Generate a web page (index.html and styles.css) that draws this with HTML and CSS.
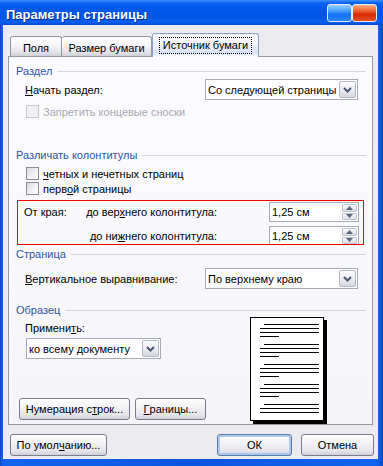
FILE: index.html
```html
<!DOCTYPE html>
<html lang="ru">
  <head>
    <meta charset="UTF-8" />
    <meta name="viewport" content="width=device-width, initial-scale=1.0" />
    <title>Параметры страницы</title>
    <link rel="stylesheet" href="styles.css">
  </head>
  <body>
    <div class="window">
      <div class="titlebar">
        <span class="title">Параметры страницы</span>
        <div class="caption-buttons">
          <span class="cap-btn help"></span>
          <span class="cap-btn close"></span>
        </div>
      </div>

      <div class="frame">
        <div class="client">
          <div class="tabs">
            <div class="tab tab-fields">Поля</div>
            <div class="tab tab-size">Размер бумаги</div>
            <div class="tab active"><span class="focus">Источник бумаги</span></div>
          </div>

          <div class="panel">
            <div class="group-title first">Раздел</div>
            <div class="row row-combo">
              <span><u>Н</u>ачать раздел:</span>
              <div class="combo combo-wide">
                <span class="combo-text">Со следующей страницы</span>
                <span class="combo-btn">
                  <svg width="9" height="6" viewBox="0 0 9 6"><path d="M1 1l3.5 3.5L8 1" /></svg>
                </span>
              </div>
            </div>
            <div class="check disabled first-check">
              <span class="box"></span>
              <span>Запретить концевые сноски</span>
            </div>

            <div class="group-title hdr-headers">Различать колонтитулы</div>
            <div class="check first-check">
              <span class="box"></span>
              <span><u>ч</u>етных и нечетных страниц</span>
            </div>
            <div class="check">
              <span class="box"></span>
              <span>перв<u>о</u>й страницы</span>
            </div>

            <div class="edges">
              <div class="edge-row">
                <span class="edge-cap">От края:</span>
                <span class="edge-label">до вер<u>х</u>него колонтитула:</span>
                <div class="spin">
                  <span class="spin-val">1,25 см</span>
                  <span class="spin-btns">
                    <span class="spin-half"><svg width="7" height="4" viewBox="0 0 7 4"><path d="M0 4L3.5 0L7 4Z" /></svg></span>
                    <span class="spin-half"><svg width="7" height="4" viewBox="0 0 7 4"><path d="M0 0L3.5 4L7 0Z" /></svg></span>
                  </span>
                </div>
              </div>
              <div class="edge-row second">
                <span class="edge-cap"></span>
                <span class="edge-label">до ни<u>ж</u>него колонтитула:</span>
                <div class="spin">
                  <span class="spin-val">1,25 см</span>
                  <span class="spin-btns">
                    <span class="spin-half"><svg width="7" height="4" viewBox="0 0 7 4"><path d="M0 4L3.5 0L7 4Z" /></svg></span>
                    <span class="spin-half"><svg width="7" height="4" viewBox="0 0 7 4"><path d="M0 0L3.5 4L7 0Z" /></svg></span>
                  </span>
                </div>
              </div>
            </div>

            <div class="group-title hdr-page">Страница</div>
            <div class="row row-combo row-valign">
              <span><u>В</u>ертикальное выравнивание:</span>
              <div class="combo combo-wide">
                <span class="combo-text">По верхнему краю</span>
                <span class="combo-btn">
                  <svg width="9" height="6" viewBox="0 0 9 6"><path d="M1 1l3.5 3.5L8 1" /></svg>
                </span>
              </div>
            </div>

            <div class="group-title hdr-sample">Образец</div>
            <div class="sample">
              <div class="sample-left">
                <div class="apply-label">Примени<u>т</u>ь:</div>
                <div class="combo combo-apply">
                  <span class="combo-text">ко всему документу</span>
                  <span class="combo-btn">
                    <svg width="9" height="6" viewBox="0 0 9 6"><path d="M1 1l3.5 3.5L8 1" /></svg>
                  </span>
                </div>
                <div class="sample-buttons">
                  <button class="btn btn-lines">Нумерация с<u>т</u>рок...</button>
                  <button class="btn btn-borders"><u>Г</u>раницы...</button>
                </div>
              </div>
              <div class="page">
                <div class="para"><i class="ln indent"></i><i class="ln"></i><i class="ln"></i><i class="ln short"></i></div>
                <div class="para"><i class="ln indent"></i><i class="ln"></i><i class="ln"></i><i class="ln short"></i></div>
                <div class="para"><i class="ln indent"></i><i class="ln"></i><i class="ln"></i><i class="ln short"></i></div>
                <div class="para"><i class="ln indent"></i><i class="ln"></i><i class="ln"></i><i class="ln short"></i></div>
                <div class="para"><i class="ln indent"></i><i class="ln"></i><i class="ln"></i></div>
              </div>
            </div>
          </div>

          <div class="footer">
            <button class="btn btn-default">По умол<u>ч</u>анию...</button>
            <button class="btn btn-ok">ОК</button>
            <button class="btn btn-cancel">Отмена</button>
          </div>
        </div>
      </div>
    </div>
  </body>
</html>
```

FILE: styles.css
```css
* {
  margin: 0;
  padding: 0;
  box-sizing: border-box;
}

body {
  font-family: "Liberation Sans", Arial, sans-serif;
  font-size: 11px;
  color: #000;
  background-color: #0b56df;
}

u {
  text-decoration: underline;
  text-underline-offset: 1px;
}

.window {
  width: 383px;
  height: 466px;
  display: flex;
  flex-direction: column;
}

/* title bar */
.titlebar {
  height: 25px;
  display: flex;
  align-items: flex-start;
  padding-left: 6px;
  background: linear-gradient(#3d93ff 0, #0a62f2 3px, #0058ee 8px, #0055e5 17px, #0a60f0 22px, #0347d2 25px);
}

.title {
  flex: 1;
  color: #fff;
  font-weight: bold;
  font-size: 13px;
  line-height: 15px;
  padding-top: 7px;
  text-shadow: 1px 1px 0 #0b2c8a;
}

.caption-buttons {
  display: flex;
  margin: 4px 6px 0 0;
}

.cap-btn {
  width: 25px;
  height: 18px;
  border: 1px solid #e4ecf8;
  border-radius: 3px;
}

.help {
  background: linear-gradient(#9bd0ff, #4aa2ff 35%, #1470f5 60%, #2a86ff);
}

.close {
  background: linear-gradient(#ffb080, #ec6536 35%, #d42a00 60%, #e2522a);
}

/* window body */
.frame {
  flex: 1;
  display: flex;
  padding: 0 5px 7px 3px;
  background: linear-gradient(to right, #0a48c8, #1463ec 3px, #0b56df 50%, #1463ec calc(100% - 5px), #0a48c8);
}

.client {
  flex: 1;
  display: flex;
  flex-direction: column;
  background-color: #ecebf0;
  padding: 8px 4px 3px 5px;
}

/* tabs */
.tabs {
  display: flex;
  align-items: flex-end;
  height: 23px;
  padding-left: 2px;
}

.tab {
  height: 20px;
  display: flex;
  align-items: center;
  justify-content: center;
  padding-top: 3px;
  border: 1px solid #919b9c;
  border-bottom: none;
  border-radius: 3px 3px 0 0;
  background: linear-gradient(#ffffff, #f4f4f7 45%, #e3e3e9 80%, #cfcfd7);
}

.tab-fields {
  width: 52px;
}

.tab-size {
  width: 90px;
  border-left: none;
}

.tab.active {
  position: relative;
  z-index: 1;
  width: 107px;
  height: 24px;
  margin-bottom: -1px;
  padding-top: 0;
  border-color: #8ba3c9;
  background: linear-gradient(#fdfdff, #f1f4fa 45%, #d7e2f3 80%, #fcfcfe);
}

.focus {
  outline: 1px dotted #000;
  padding: 1px 3px 2px;
}

/* page panel */
.panel {
  height: 369px;
  margin-right: 1px;
  padding: 0 6px 0 7px;
  border: 1px solid #919b9c;
  background: linear-gradient(#fcfcfe, #f5f5f9);
}

.group-title {
  display: flex;
  align-items: center;
  height: 14px;
  color: #2c56a8;
}

.group-title::after {
  content: "";
  flex: 1;
  height: 1px;
  margin-left: 5px;
  background-color: #d3d4db;
}

.group-title.first {
  margin-top: 7px;
}

.hdr-headers {
  margin-top: 29px;
}

.hdr-page {
  margin-top: 2px;
}

.hdr-sample {
  margin-top: 14px;
}

.row {
  display: flex;
  align-items: center;
  padding: 0 8px 0 9px;
}

.row-combo {
  height: 21px;
  margin-top: 1px;
}

.row-valign {
  margin-top: 7px;
}

.combo {
  height: 21px;
  display: flex;
  align-items: center;
  border: 1px solid #a5acb5;
  background-color: #fff;
}

.combo-wide {
  width: 153px;
  margin-left: auto;
}

.combo-text {
  flex: 1;
  padding-left: 2px;
  white-space: nowrap;
}

.combo-btn {
  width: 17px;
  height: 17px;
  margin-right: 1px;
  display: flex;
  align-items: center;
  justify-content: center;
  border: 1px solid #b4b9c6;
  border-radius: 2px;
  background: linear-gradient(#fdfdfe, #e9e9ef 60%, #d5d6de);
}

.combo-btn path {
  fill: none;
  stroke: #4c5874;
  stroke-width: 2;
}

/* check boxes */
.check {
  display: flex;
  align-items: center;
  height: 15px;
  padding-left: 10px;
  gap: 4px;
}

.first-check {
  margin-top: 4px;
}

.box {
  width: 13px;
  height: 13px;
  border: 1px solid #8c8d99;
  background: linear-gradient(135deg, #d9d9de, #f4f4f6 60%, #ffffff);
}

.check.disabled {
  color: #a9a9b0;
}

.check.disabled .box {
  border-color: #c9c9cf;
  background: #f1f1f3;
}

/* header / footer distances (marked in red) */
.edges {
  position: relative;
  height: 45px;
  margin: 4px 2px 0 1px;
  padding: 2px 5px 0 7px;
  overflow: hidden;
}

.edges::after {
  content: "";
  position: absolute;
  inset: 0;
  border: 1px solid #ee0000;
}

.edge-row {
  display: flex;
  align-items: center;
  height: 20px;
}

.edge-row.second {
  margin-top: 4px;
}

.edge-cap {
  width: 50px;
}

.edge-label {
  width: 143px;
  text-align: right;
  white-space: nowrap;
}

.spin {
  width: 90px;
  height: 20px;
  margin-left: auto;
  display: flex;
  border: 1px solid #a5acb5;
  background-color: #fff;
}

.spin-val {
  flex: 1;
  padding-left: 2px;
  line-height: 18px;
}

.spin-btns {
  width: 16px;
  display: flex;
  flex-direction: column;
  gap: 1px;
  padding: 1px 1px 1px 0;
}

.spin-half {
  flex: 1;
  display: flex;
  align-items: center;
  justify-content: center;
  border: 1px solid #c0c4cf;
  border-radius: 1px;
  background: linear-gradient(#fafafc, #dcdde4);
}

.spin-half path {
  fill: #5a6478;
}

/* sample */
.sample {
  height: 107px;
  display: flex;
}

.sample-left {
  flex: 1;
  display: flex;
  flex-direction: column;
  padding-bottom: 4px;
}

.apply-label {
  height: 14px;
  line-height: 14px;
  margin-top: 4px;
  padding-left: 9px;
}

.combo-apply {
  width: 135px;
  margin: 3px 0 0 10px;
}

.sample-buttons {
  display: flex;
  gap: 5px;
  margin-top: auto;
  margin-left: 3px;
}

.page {
  width: 74px;
  height: 104px;
  margin-right: 42px;
  display: flex;
  flex-direction: column;
  gap: 7px;
  padding: 6px 4px 0 9px;
  border: 1px solid #000;
  background-color: #fff;
  box-shadow: 3px 3px 0 #000;
  overflow: hidden;
}

.para {
  display: flex;
  flex-direction: column;
  gap: 3px;
}

.ln {
  display: block;
  height: 1px;
  background-color: #000;
}

.ln.indent {
  margin-left: 4px;
}

.ln.short {
  width: 19px;
}

/* buttons */
.btn {
  height: 22px;
  display: flex;
  align-items: center;
  justify-content: center;
  font: inherit;
  color: #000;
  border: 1px solid #7a7b8e;
  border-radius: 3px;
  background: linear-gradient(#ffffff, #f3f3f6 40%, #e4e4ea 80%, #cfd0d8);
}

.btn-lines {
  width: 111px;
}

.btn-borders {
  width: 71px;
}

.footer {
  display: flex;
  margin-top: 9px;
  padding-left: 2px;
}

.btn-default {
  width: 97px;
}

.btn-ok {
  width: 75px;
  margin-left: auto;
  border-color: #5d7aa6;
  box-shadow: inset 0 0 0 2px #a9caef;
}

.btn-cancel {
  width: 73px;
  margin-left: 9px;
}
```
